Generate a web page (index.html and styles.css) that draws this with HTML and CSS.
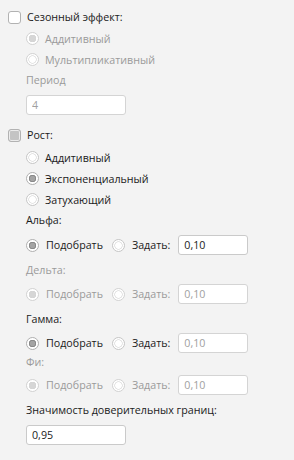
FILE: index.html
```html
<!DOCTYPE html>
<html lang="ru">
<head>
    <meta charset="UTF-8">
    <title>Параметры модели</title>
    <link rel="stylesheet" href="styles.css">
</head>
<body>
    <div class="panel">
        <label class="check-row">
            <input type="checkbox" class="box">
            <span>Сезонный эффект:</span>
        </label>
        <div class="group season">
            <label class="radio-row disabled">
                <input type="radio" name="season" class="dot" checked disabled>
                <span>Аддитивный</span>
            </label>
            <label class="radio-row disabled">
                <input type="radio" name="season" class="dot" disabled>
                <span>Мультипликативный</span>
            </label>
            <div class="field-label tall disabled">Период</div>
            <input type="text" class="field wide first" value="4" disabled>
        </div>

        <label class="check-row growth">
            <input type="checkbox" class="box filled">
            <span>Рост:</span>
        </label>
        <div class="group trend">
            <label class="radio-row">
                <input type="radio" name="trend" class="dot">
                <span>Аддитивный</span>
            </label>
            <label class="radio-row">
                <input type="radio" name="trend" class="dot" checked>
                <span>Экспоненциальный</span>
            </label>
            <label class="radio-row">
                <input type="radio" name="trend" class="dot">
                <span>Затухающий</span>
            </label>

            <div class="field-label alpha">Альфа:</div>
            <div class="param-row">
                <label class="opt"><input type="radio" name="alpha" class="dot" checked><span>Подобрать</span></label>
                <label class="opt"><input type="radio" name="alpha" class="dot"><span>Задать:</span></label>
                <input type="text" class="field small" value="0,10">
            </div>

            <div class="field-label disabled">Дельта:</div>
            <div class="param-row disabled">
                <label class="opt"><input type="radio" name="delta" class="dot" checked disabled><span>Подобрать</span></label>
                <label class="opt"><input type="radio" name="delta" class="dot" disabled><span>Задать:</span></label>
                <input type="text" class="field small" value="0,10" disabled>
            </div>

            <div class="field-label">Гамма:</div>
            <div class="param-row">
                <label class="opt"><input type="radio" name="gamma" class="dot" checked><span>Подобрать</span></label>
                <label class="opt"><input type="radio" name="gamma" class="dot"><span>Задать:</span></label>
                <input type="text" class="field small" value="0,10" disabled>
            </div>

            <div class="field-label phi disabled">Фи:</div>
            <div class="param-row phi-row disabled">
                <label class="opt"><input type="radio" name="phi" class="dot" checked disabled><span>Подобрать</span></label>
                <label class="opt"><input type="radio" name="phi" class="dot" disabled><span>Задать:</span></label>
                <input type="text" class="field small" value="0,10" disabled>
            </div>

            <div class="field-label">Значимость доверительных границ:</div>
            <input type="text" class="field wide last" value="0,95">
        </div>
    </div>
</body>
</html>
```

FILE: styles.css
```css
body {
    margin: 0;
    background: #f3f3f3;
    font-family: "Open Sans", sans-serif;
    font-size: 10.7px;
    color: #1a1a1a;
}

.panel {
    padding-top: 9px;
}

.check-row {
    display: flex;
    align-items: center;
    height: 16px;
    padding-left: 8px;
    gap: 6px;
}

.check-row.growth {
    margin-top: 12px;
}

.box {
    appearance: none;
    margin: 0;
    width: 13px;
    height: 13px;
    border: 1px solid #b2b2b2;
    border-radius: 3px;
    background: #fff;
    box-sizing: border-box;
}

.box.filled {
    background: #c4c4c4;
    box-shadow: inset 0 0 0 1px #ececec;
}

.group {
    padding-left: 26px;
    display: flex;
    flex-direction: column;
    align-items: flex-start;
}

.group.season {
    padding-top: 3px;
}

.group.trend {
    padding-top: 4px;
}

.radio-row {
    display: flex;
    align-items: center;
    height: 21px;
    gap: 6px;
}

.dot {
    appearance: none;
    margin: 0;
    width: 13px;
    height: 13px;
    border: 1px solid #c6c6c6;
    border-radius: 50%;
    box-sizing: border-box;
    background: radial-gradient(circle, #fff 0 3px, #e4e4e4 3.5px 4px, #fff 4.5px);
}

.dot:checked {
    border-color: #b0b0b0;
    background: radial-gradient(circle, #a4a4a4 0 2.5px, #8a8a8a 3px 3.5px, #fff 4px);
}

.dot:disabled {
    border-color: #d2d2d2;
}

.dot:checked:disabled {
    background: radial-gradient(circle, #d6d6d6 0 3px, #cfcfcf 3.5px, #fff 4px);
}

.disabled,
.disabled span {
    color: #9a9a9a;
}

.field-label {
    height: 16px;
    line-height: 16px;
    margin-top: 7px;
}

.field-label.tall {
    height: 21px;
    line-height: 21px;
    margin-top: 0;
}

.field-label.alpha {
    height: 20px;
    line-height: 20px;
    margin-top: 0;
}

.field-label.phi {
    margin-top: 1px;
}

.field {
    box-sizing: border-box;
    height: 20px;
    border: 1px solid #cacaca;
    border-radius: 3px;
    background: #fff;
    font: inherit;
    color: #1a1a1a;
    padding: 0 5px;
}

.field:disabled {
    color: #a0a0a0;
    border-color: #d4d4d4;
}

.field.wide {
    width: 100px;
}

.field.first {
    margin-top: 4px;
}

.field.last {
    margin-top: 7px;
}

.field.small {
    width: 70px;
}

.param-row {
    display: flex;
    align-items: center;
    height: 20px;
    margin-top: 6px;
}

.field-label.alpha + .param-row {
    margin-top: 5px;
}

.param-row.phi-row {
    margin-top: 5px;
}

.opt {
    display: flex;
    align-items: center;
    gap: 7px;
    margin-right: 9px;
}

.opt + .opt {
    margin-right: 8px;
}
```
